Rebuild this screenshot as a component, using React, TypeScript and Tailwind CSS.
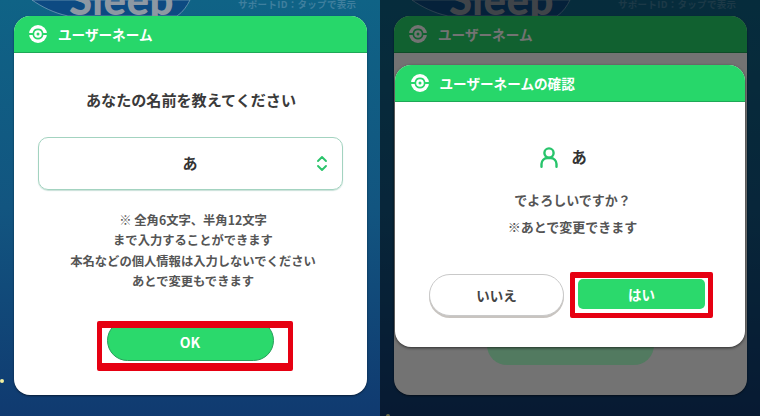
const JP = "font-['Noto_Sans_CJK_JP','Noto_Sans',sans-serif]";

function Ball() {
  return (
    <svg width="18" height="18" viewBox="0 0 18 18" className="shrink-0">
      <circle cx="9" cy="9" r="9" fill="#ffffff" />
      <path d="M0 8H3.6A5.5 5.5 0 0 1 14.4 8H18V10H14.4A5.5 5.5 0 0 1 3.6 10H0Z" fill="#27d76a" />
      <circle cx="9" cy="9" r="3.8" fill="#ffffff" />
      <circle cx="9" cy="9" r="1.5" fill="#27d76a" />
    </svg>
  );
}

function Header({ title }: { title: string }) {
  return (
    <div className="flex h-[37px] shrink-0 items-center gap-[11px] rounded-t-[16px] border-b border-[#1fa857] bg-[#27d76a] pl-[15.5px] text-[13.6px] font-bold text-white">
      <Ball />
      <span>{title}</span>
    </div>
  );
}

function Backdrop() {
  return (
    <>
      <svg width="170" height="18" viewBox="0 0 170 18" className="absolute left-[30px] top-0">
        <path d="M2 0C12 7 24 13 38 16H147C153 12 157 6 160 0Z" fill="#0d4a82" stroke="#7fa6bd" strokeWidth="0.7" />
      </svg>
      <div className="absolute left-[69px] top-[-29px] font-['Lato',sans-serif] text-[42px] font-black leading-[56px] tracking-[0.5px] text-[#8d98a3]">
        Sleep
      </div>
      <div className="absolute left-[238px] top-[-1px] text-[9.5px] font-bold leading-[11px] tracking-[0.3px] text-[#3f7f9e]">
        サポートID：タップで表示
      </div>
    </>
  );
}

function MainCard() {
  return (
    <div className="flex h-[379px] w-[353px] flex-col rounded-[16px] bg-white shadow-[0_1px_2px_rgba(0,0,0,0.5)]">
      <Header title="ユーザーネーム" />
      <div className="flex flex-col items-center pt-[33px]">
        <div className="pl-[2px] text-[15.1px] font-bold leading-[26px] text-[#3a3a3a]">あなたの名前を教えてください</div>
        <div className="relative mt-[25px] flex h-[53px] w-[305px] items-center justify-center rounded-[10px] border border-[#a3d3c0] text-[15px] font-bold text-[#333333] shadow-[0_1px_1px_rgba(120,180,160,0.4)]">
          あ
          <svg width="12" height="17" viewBox="0 0 12 17" className="absolute right-[14px] top-[17px]" fill="none" stroke="#2bc46b" strokeWidth="1.9" strokeLinecap="round" strokeLinejoin="round">
            <path d="M2 6 6 2l4 4" />
            <path d="M2 11l4 4 4-4" />
          </svg>
        </div>
        <div className="mt-[19.5px] pl-[6px] text-center text-[12.3px] font-bold leading-[20.5px] text-[#555555]">
          <div>※ 全角6文字、半角12文字</div>
          <div>まで入力することができます</div>
          <div>本名などの個人情報は入力しないでください</div>
          <div>あとで変更もできます</div>
        </div>
        <div className="mt-[33px] h-[36px] w-[167px] overflow-hidden">
          <div className="-mt-[5px] flex h-[41px] items-center justify-center rounded-full border border-[#2a9d5c] bg-[#2bd96c] pt-[5px] text-[14px] font-bold text-white">
            OK
          </div>
        </div>
      </div>
    </div>
  );
}

function ConfirmCard() {
  return (
    <div className="absolute left-[15px] top-[65px] flex h-[282px] w-[350px] flex-col rounded-[16px] bg-white shadow-[0_1px_3px_rgba(0,0,0,0.6)]">
      <Header title="ユーザーネームの確認" />
      <div className="flex flex-col items-center pt-[44px]">
        <div className="flex h-[22px] items-center gap-[13px] pr-[13px] text-[15.5px] font-bold text-[#333333]">
          <svg width="18" height="21" viewBox="0 0 18 21" fill="none" stroke="#27c46b" strokeWidth="2.4" strokeLinecap="round">
            <circle cx="9" cy="6" r="4.6" />
            <path d="M1.5 19.8v-2.8a6 6 0 0 1 6-6h3a6 6 0 0 1 6 6v2.8" />
          </svg>
          <span>あ</span>
        </div>
        <div className="mt-[18px] pl-[5px] text-center text-[13px] font-bold leading-[27px] text-[#555555]">
          <div>でよろしいですか？</div>
          <div>※あとで変更できます</div>
        </div>
        <div className="mt-[34px] flex w-full items-start gap-[14px] pl-[34px]">
          <div className="flex h-[42px] w-[135px] items-center justify-center rounded-full border border-[#c9c9c9] bg-white text-[13.5px] font-bold text-[#444444] shadow-[0_2px_0_#c8c4c0]">
            いいえ
          </div>
          <div className="mt-[5px] flex h-[30px] w-[127px] items-center justify-center rounded-[5px] bg-[#2bd96c] text-[13.5px] font-bold text-white">
            はい
          </div>
        </div>
      </div>
    </div>
  );
}

function Panel({ children, dim, dotClass }: { children?: React.ReactNode; dim?: boolean; dotClass: string }) {
  return (
    <div className="relative h-[416px] w-[380px] shrink-0 overflow-hidden bg-gradient-to-b from-[#0f6386] via-[#125580] to-[#103a70] pl-[13.5px] pt-[16px]">
      <Backdrop />
      <div className={`absolute h-[4px] w-[4px] rounded-full bg-[#f4f0a0] ${dotClass}`} />
      <div className="relative">
        <MainCard />
      </div>
      {dim && <div className="absolute inset-0 bg-black/55" />}
      {children}
    </div>
  );
}

export default function App() {
  return (
    <div className={`flex h-[416px] w-[760px] overflow-hidden ${JP}`}>
      <Panel dotClass="left-0 top-[379px]">
        <div className="absolute left-[97px] top-[321px] h-[50px] w-[196px] rounded-[2px] border-x-[5px] border-t-[7px] border-b-[8px] border-[#e60012]" />
      </Panel>
      <Panel dim dotClass="left-[6px] top-[414px]">
        <div className="absolute left-[107px] top-[323px] h-[42px] w-[167px] rounded-[20px] bg-[#527a60]" />
        <ConfirmCard />
        <div className="absolute left-[190px] top-[272px] h-[46px] w-[143px] rounded-[2px] border-x-[5px] border-t-[6px] border-b-[5px] border-[#e60012]" />
      </Panel>
    </div>
  );
}
